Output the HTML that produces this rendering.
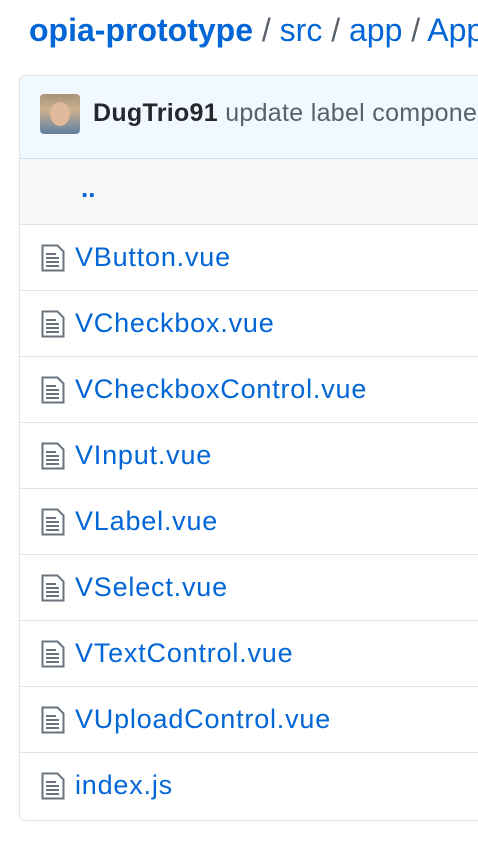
<!DOCTYPE html>
<html><head><style>
body{margin:0;width:478px;height:846px;background:#fff;font-family:"Liberation Sans",sans-serif;overflow:hidden;position:relative}
.t{position:absolute;left:29px;top:12px;font-size:32px;color:#0366d6;white-space:nowrap}
.t b{font-weight:bold}.t .s{color:#586069}
.box{position:absolute;left:19px;top:75px;width:480px;height:744px;border:1px solid #e1e4e8;border-radius:6px;border-right:none;overflow:hidden}
.hd{height:82px;background:#f1f8ff;border:1px solid #c8e1ff;margin:-1px -1px 0 -1px;position:relative}
.av{position:absolute;left:20px;top:18px;width:40px;height:40px;border-radius:4px;background:linear-gradient(#a89378,#c9b08f 40%,#5f7f9f)}
.av:after{content:"";position:absolute;left:10px;top:8px;width:20px;height:24px;border-radius:50%;background:#e0b89c}
.hd span{position:absolute;left:73px;top:23px;font-size:25px;color:#586069;white-space:nowrap;letter-spacing:0.3px}
.hd span b{color:#24292e}
.up{height:65px;background:#f6f8fa;border-bottom:1px solid #e1e4e8;position:relative}
.up span{position:absolute;left:61px;top:14px;font-size:26px;color:#0366d6;font-weight:bold}
.r{height:65px;border-bottom:1px solid #e1e4e8;position:relative}
.r svg{position:absolute;left:21px;top:19px}
.r span{position:absolute;left:55px;top:17px;font-size:27px;letter-spacing:0.8px;color:#0366d6}
</style></head><body>
<div class="t"><b>opia-prototype</b> <span class="s">/</span> src <span class="s">/</span> app <span class="s">/</span> App</div>
<div class="box">
<div class="hd"><div class="av"></div><span><b>DugTrio91</b> update label component</span></div>
<div class="up"><span>..</span></div>
<div class="r"><svg width="24" height="28" viewBox="0 0 24 28"><path d="M1.5 1.5h15l6 6v19h-21z" fill="none" stroke="#6a737d" stroke-width="2"/><path d="M5 10h10M5 14h13M5 18h13M5 22h13" stroke="#6a737d" stroke-width="2"/></svg><span>VButton.vue</span></div>
<div class="r"><svg width="24" height="28" viewBox="0 0 24 28"><path d="M1.5 1.5h15l6 6v19h-21z" fill="none" stroke="#6a737d" stroke-width="2"/><path d="M5 10h10M5 14h13M5 18h13M5 22h13" stroke="#6a737d" stroke-width="2"/></svg><span>VCheckbox.vue</span></div>
<div class="r"><svg width="24" height="28" viewBox="0 0 24 28"><path d="M1.5 1.5h15l6 6v19h-21z" fill="none" stroke="#6a737d" stroke-width="2"/><path d="M5 10h10M5 14h13M5 18h13M5 22h13" stroke="#6a737d" stroke-width="2"/></svg><span>VCheckboxControl.vue</span></div>
<div class="r"><svg width="24" height="28" viewBox="0 0 24 28"><path d="M1.5 1.5h15l6 6v19h-21z" fill="none" stroke="#6a737d" stroke-width="2"/><path d="M5 10h10M5 14h13M5 18h13M5 22h13" stroke="#6a737d" stroke-width="2"/></svg><span>VInput.vue</span></div>
<div class="r"><svg width="24" height="28" viewBox="0 0 24 28"><path d="M1.5 1.5h15l6 6v19h-21z" fill="none" stroke="#6a737d" stroke-width="2"/><path d="M5 10h10M5 14h13M5 18h13M5 22h13" stroke="#6a737d" stroke-width="2"/></svg><span>VLabel.vue</span></div>
<div class="r"><svg width="24" height="28" viewBox="0 0 24 28"><path d="M1.5 1.5h15l6 6v19h-21z" fill="none" stroke="#6a737d" stroke-width="2"/><path d="M5 10h10M5 14h13M5 18h13M5 22h13" stroke="#6a737d" stroke-width="2"/></svg><span>VSelect.vue</span></div>
<div class="r"><svg width="24" height="28" viewBox="0 0 24 28"><path d="M1.5 1.5h15l6 6v19h-21z" fill="none" stroke="#6a737d" stroke-width="2"/><path d="M5 10h10M5 14h13M5 18h13M5 22h13" stroke="#6a737d" stroke-width="2"/></svg><span>VTextControl.vue</span></div>
<div class="r"><svg width="24" height="28" viewBox="0 0 24 28"><path d="M1.5 1.5h15l6 6v19h-21z" fill="none" stroke="#6a737d" stroke-width="2"/><path d="M5 10h10M5 14h13M5 18h13M5 22h13" stroke="#6a737d" stroke-width="2"/></svg><span>VUploadControl.vue</span></div>
<div class="r" style="border-bottom:none"><svg width="24" height="28" viewBox="0 0 24 28"><path d="M1.5 1.5h15l6 6v19h-21z" fill="none" stroke="#6a737d" stroke-width="2"/><path d="M5 10h10M5 14h13M5 18h13M5 22h13" stroke="#6a737d" stroke-width="2"/></svg><span>index.js</span></div>
</div>
</body></html>
